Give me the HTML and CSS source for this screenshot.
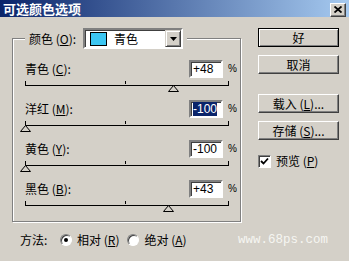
FILE: index.html
```html
<!DOCTYPE html>
<html lang="zh-CN">
<head>
    <meta charset="utf-8">
    <title>可选颜色选项</title>
    <link rel="stylesheet" href="styles.css">
</head>
<body>
    <div class="window">
        <div class="titlebar">
            <span class="title">可选颜色选项</span>
            <span class="close-btn">
                <svg width="8" height="7" viewBox="0 0 8 7"><path d="M0.5 0.5 L7.5 6.5 M7.5 0.5 L0.5 6.5" stroke="#000" stroke-width="1.8" fill="none"/></svg>
            </span>
        </div>

        <div class="dialog-body">
            <fieldset class="group">
                <legend class="group-head">
                    <div class="group-head-inner">
                        <span class="head-label">颜色 (<u>O</u>):</span>
                        <span class="select">
                            <span class="swatch"></span>
                            <span class="select-text">青色</span>
                            <span class="select-btn">
                                <svg width="7" height="4" viewBox="0 0 7 4"><path d="M0 0 H7 L3.5 4 Z" fill="#000"/></svg>
                            </span>
                        </span>
                    </div>
                </legend>

                <div class="channel">
                    <div class="channel-head">
                        <span class="channel-label">青色 (<u>C</u>):</span>
                        <span class="field">+48</span>
                        <span class="pct">%</span>
                    </div>
                    <div class="slider"><span class="thumb" style="left: 148px"><svg width="11" height="7" viewBox="0 0 11 7"><path d="M5.5 0.5 L10.5 6.5 L0.5 6.5 Z" fill="#d4d0c8" stroke="#000"/></svg></span></div>
                </div>

                <div class="channel">
                    <div class="channel-head">
                        <span class="channel-label">洋红 (<u>M</u>):</span>
                        <span class="field field-focus"><span class="selected">-100</span></span>
                        <span class="pct">%</span>
                    </div>
                    <div class="slider"><span class="thumb" style="left: 0px"><svg width="11" height="7" viewBox="0 0 11 7"><path d="M5.5 0.5 L10.5 6.5 L0.5 6.5 Z" fill="#d4d0c8" stroke="#000"/></svg></span></div>
                </div>

                <div class="channel">
                    <div class="channel-head">
                        <span class="channel-label">黄色 (<u>Y</u>):</span>
                        <span class="field">-100</span>
                        <span class="pct">%</span>
                    </div>
                    <div class="slider"><span class="thumb" style="left: 0px"><svg width="11" height="7" viewBox="0 0 11 7"><path d="M5.5 0.5 L10.5 6.5 L0.5 6.5 Z" fill="#d4d0c8" stroke="#000"/></svg></span></div>
                </div>

                <div class="channel">
                    <div class="channel-head">
                        <span class="channel-label">黑色 (<u>B</u>):</span>
                        <span class="field">+43</span>
                        <span class="pct">%</span>
                    </div>
                    <div class="slider"><span class="thumb" style="left: 143px"><svg width="11" height="7" viewBox="0 0 11 7"><path d="M5.5 0.5 L10.5 6.5 L0.5 6.5 Z" fill="#d4d0c8" stroke="#000"/></svg></span></div>
                </div>
            </fieldset>

            <div class="actions">
                <span class="btn btn-default">好</span>
                <span class="btn">取消</span>
                <span class="btn btn-gap">载入 (<u>L</u>)...</span>
                <span class="btn">存储 (<u>S</u>)...</span>
                <label class="check">
                    <span class="check-box">
                        <svg width="9" height="9" viewBox="0 0 9 9"><path d="M1 4 L3.5 6.5 L8 1.5" stroke="#000" stroke-width="1.8" fill="none"/></svg>
                    </span>
                    <span>预览 (<u>P</u>)</span>
                </label>
            </div>
        </div>

        <div class="method">
            <span class="method-label">方法:</span>
            <span class="radio radio-on"></span>
            <span class="radio-text">相对 (<u>R</u>)</span>
            <span class="radio radio-second"></span>
            <span class="radio-text">绝对 (<u>A</u>)</span>
            <span class="watermark">www.68ps.com</span>
        </div>
    </div>
</body>
</html>
```

FILE: styles.css
```css
* {
    margin: 0;
    padding: 0;
    box-sizing: border-box;
}

body {
    background: #d4d0c8;
    color: #000;
    font-family: "Noto Sans CJK SC", "Liberation Sans", sans-serif;
    font-size: 12px;
    line-height: 14px;
    width: 349px;
    height: 261px;
    overflow: hidden;
}

u {
    text-decoration: underline;
    text-underline-offset: 1px;
}

.titlebar {
    height: 17px;
    background: linear-gradient(90deg, #0a246a, #a6caf0);
    display: flex;
    align-items: center;
    justify-content: space-between;
    padding: 0 3px 0 3px;
}

.title {
    color: #fff;
    font-weight: 700;
    font-size: 13px;
    line-height: 15px;
}

.close-btn {
    width: 16px;
    height: 14px;
    background: #d4d0c8;
    border: 1px solid;
    border-color: #fff #404040 #404040 #fff;
    box-shadow: inset -1px -1px 0 #808080;
    display: flex;
    align-items: center;
    justify-content: center;
    margin-top: 2px;
}

.dialog-body {
    display: flex;
    align-items: flex-start;
    padding: 11px 0 0 12px;
}

/* group box */
.group {
    width: 229px;
    border: 1px solid #808080;
    box-shadow: 1px 1px 0 #fff, inset 1px 1px 0 #fff;
    padding: 11px 4px 1px 12px;
}

.group-head {
    padding: 0 4px;
    background: #d4d0c8;
}

.group-head-inner {
    display: flex;
    align-items: center;
}

.head-label {
    width: 54px;
    white-space: nowrap;
}

.select {
    width: 100px;
    height: 21px;
    background: #fff;
    border: 2px solid;
    border-color: #808080 #fff #fff #808080;
    box-shadow: inset 1px 1px 0 #404040;
    display: flex;
    align-items: center;
    padding-left: 5px;
}

.swatch {
    width: 17px;
    height: 14px;
    background: #3cc6f2;
    border: 1px solid #000;
    margin-right: 7px;
}

.select-text {
    flex: 1;
}

.select-btn {
    width: 16px;
    height: 17px;
    background: #d4d0c8;
    border: 1px solid;
    border-color: #d4d0c8 #404040 #404040 #d4d0c8;
    box-shadow: inset 1px 1px 0 #fff, inset -1px -1px 0 #808080;
    display: flex;
    align-items: center;
    justify-content: center;
}

/* channel rows */
.channel {
    width: 211px;
}

.channel-head {
    display: flex;
    align-items: center;
    height: 18px;
}

.channel-label {
    flex: 1;
    white-space: nowrap;
}

.field {
    width: 34px;
    height: 18px;
    background: #fff;
    border: 2px solid;
    border-color: #808080 #fff #fff #808080;
    box-shadow: inset 1px 1px 0 #404040;
    font-family: "Liberation Sans", sans-serif;
    font-size: 12px;
    line-height: 14px;
    padding-left: 2px;
}

.selected {
    background: #0a246a;
    color: #fff;
}

.pct {
    margin-left: 5px;
    width: 8px;
    font-family: "Liberation Sans", sans-serif;
    font-size: 10px;
}

.slider {
    position: relative;
    width: 202px;
    height: 22px;
}

.slider::before {
    content: "";
    position: absolute;
    top: 3px;
    left: 0;
    width: 202px;
    height: 4px;
    border: 1px solid #000;
    border-top: none;
}

.slider::after {
    content: "";
    position: absolute;
    top: 3px;
    left: 100px;
    width: 1px;
    height: 3px;
    background: #000;
}

.thumb {
    position: absolute;
    top: 7px;
    margin-left: -5px;
    width: 11px;
    height: 7px;
    display: block;
}

.thumb svg {
    display: block;
}

/* right column */
.actions {
    margin-left: 17px;
    width: 81px;
    display: flex;
    flex-direction: column;
    gap: 8px;
}

.btn {
    height: 19px;
    background: #d4d0c8;
    border: 1px solid;
    border-color: #fff #404040 #404040 #fff;
    box-shadow: inset -1px -1px 0 #808080;
    display: flex;
    align-items: center;
    justify-content: center;
    white-space: nowrap;
}

.btn-default {
    border: 1px solid #000;
    box-shadow: inset 1px 1px 0 #fff, inset -1px -1px 0 #808080;
}

.btn-gap {
    margin-top: 12px;
}

.check {
    display: flex;
    align-items: center;
    gap: 5px;
    margin-top: 6px;
    white-space: nowrap;
}

.check-box {
    width: 13px;
    height: 13px;
    background: #fff;
    border: 1px solid;
    border-color: #808080 #fff #fff #808080;
    box-shadow: inset 1px 1px 0 #404040;
    display: flex;
    align-items: center;
    justify-content: center;
}

/* bottom row */
.method {
    display: flex;
    align-items: center;
    height: 14px;
    margin-top: 11px;
    padding: 0 21px 0 20px;
    white-space: nowrap;
}

.method-label {
    width: 40px;
}

.radio {
    flex: none;
    width: 12px;
    height: 12px;
    border-radius: 50%;
    background: #fff;
    border: 1px solid;
    border-color: #808080 #fff #fff #808080;
    box-shadow: inset 1px 1px 0 #404040;
    margin-right: 5px;
    position: relative;
}

.radio-on::after {
    content: "";
    position: absolute;
    left: 3px;
    top: 3px;
    width: 4px;
    height: 4px;
    border-radius: 50%;
    background: #000;
}

.radio-second {
    margin-left: 8px;
}

.watermark {
    margin-left: auto;
    font-family: "Liberation Mono", "DejaVu Sans Mono", monospace;
    font-size: 12.5px;
    color: #f6f6f2;
}
```
